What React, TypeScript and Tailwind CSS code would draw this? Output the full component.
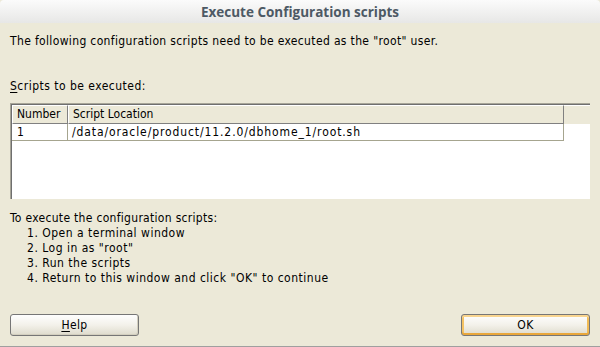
const steps = [
  'Open a terminal window',
  'Log in as "root"',
  'Run the scripts',
  'Return to this window and click "OK" to continue',
]

const rows = [{ num: '1', location: '/data/oracle/product/11.2.0/dbhome_1/root.sh' }]

function DialogButton({ children, isDefault }: { children: React.ReactNode; isDefault?: boolean }) {
  return (
    <button
      type="button"
      className={
        'w-[129px] h-[22px] rounded-[3px] border border-[#767676] bg-gradient-to-b from-[#fefefe] via-[#f3f1ea] to-[#dedbcc] text-black leading-none tracking-[0.4px] ' +
        (isDefault
          ? 'shadow-[inset_0_2px_0_#f9d58f,inset_0_-2px_0_#e9a73b,inset_2px_0_0_#f4c263,inset_-2px_0_0_#f1bb55]'
          : 'shadow-[inset_-1px_-1px_0_#d3cfbf]')
      }
    >
      {children}
    </button>
  )
}

export default function App() {
  return (
    <div className="w-[600px] h-[347px] overflow-hidden bg-[#ece9d8] flex flex-col font-['DejaVu_Sans_Condensed','DejaVu_Sans',sans-serif] font-stretch-condensed text-[12px] text-black">
      {/* Title bar */}
      <div className="h-[23px] shrink-0 rounded-t-[4px] bg-gradient-to-b from-[#fbfbfb] to-[#e7e7e6] flex items-center justify-center pt-[1px]">
        <span className="font-['Open_Sans',sans-serif] font-bold text-[13.5px] text-[#4d5964] font-stretch-normal">
          Execute Configuration scripts
        </span>
      </div>

      <div className="flex flex-col px-[10px] pt-[11px] tracking-[0.4px]">
        <p className="leading-[15px] tracking-[0.35px]">The following configuration scripts need to be executed as the "root" user.</p>

        <p className="leading-[15px] mt-[30px] tracking-[0.48px]">
          <span className="underline underline-offset-2">S</span>cripts to be executed:
        </p>

        {/* Scripts table */}
        <div className="mt-[9px] h-[96px] w-[580px] border-t border-l border-[#a7a598] bg-white tracking-normal">
          <div className="h-full border-t border-l border-[#6f6f6f] flex flex-col">
            <div className="flex h-[19px] bg-[#ece9d8]">
              <div className="w-[56px] border-t border-l border-white border-r border-r-[#808080] border-b border-b-[#808080] pl-[4px] leading-[16px]">
                Number
              </div>
              <div className="w-[496px] border-t border-l border-white border-r border-r-[#808080] border-b border-b-[#808080] pl-[4px] leading-[16px]">
                Script Location
              </div>
              <div className="flex-1 border-t border-white" />
            </div>
            {rows.map((r) => (
              <div key={r.num} className="flex h-[17px]">
                <div className="w-[56px] border-r border-b border-[#a6a58f] pl-[5px] leading-[16px]">{r.num}</div>
                <div className="w-[496px] border-r border-b border-[#a6a58f] pl-[4px] leading-[16px] tracking-[0.9px]">
                  {r.location}
                </div>
              </div>
            ))}
          </div>
        </div>

        {/* Instructions */}
        <div className="mt-[12px] leading-[15px]">
          <p className="tracking-[0.3px]">To execute the configuration scripts:</p>
          {steps.map((s, i) => (
            <p key={i} className="pl-[17px] tracking-[0.5px]">
              {i + 1}. {s}
            </p>
          ))}
        </div>

        <div className="mt-[28px] flex justify-between">
          <DialogButton>
            <span className="underline underline-offset-2">H</span>elp
          </DialogButton>
          <DialogButton isDefault>OK</DialogButton>
        </div>
      </div>

      <div className="mt-auto h-px bg-[#9f9f9f]" />
    </div>
  )
}
